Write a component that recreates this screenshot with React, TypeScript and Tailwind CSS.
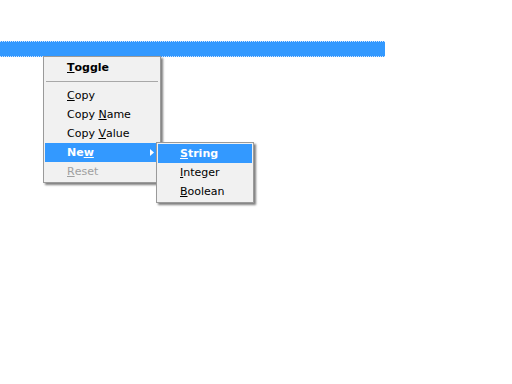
import React from "react";

const U = ({ children }: { children: React.ReactNode }) => (
  <span className="underline underline-offset-[1px]">{children}</span>
);

function Item({
  children,
  active,
  disabled,
  bold,
  arrow,
}: {
  children: React.ReactNode;
  active?: boolean;
  disabled?: boolean;
  bold?: boolean;
  arrow?: boolean;
}) {
  return (
    <div
      className={`relative flex h-[19px] items-center pl-[22px] pt-[2px] ${
        active ? "bg-[#3399ff] text-white" : disabled ? "text-[#a0a0a0]" : "text-black"
      } ${bold ? "font-bold" : ""}`}
    >
      {children}
      {arrow && (
        <svg className="absolute right-[5px] top-[6px]" width="4" height="7" viewBox="0 0 4 7">
          <path d="M0 0 L4 3.5 L0 7 Z" fill="white" />
        </svg>
      )}
    </div>
  );
}

export default function App() {
  return (
    <div
      className="relative h-[384px] w-[512px] bg-white text-[11px]"
      style={{ fontFamily: '"DejaVu Sans", Tahoma, sans-serif' }}
    >
      <div className="h-[41px]" />
      <div className="h-[16px] w-[385px] border-y border-dotted border-[#cfe4ff] bg-[#3399ff]" />

      {/* main menu */}
      <div className="absolute left-[43px] top-[56px] w-[118px] border border-[#9a9a9a] bg-[#f1f1f1] p-[1px] shadow-[2px_2px_2px_rgba(0,0,0,0.5)]">
        <Item bold>
          <U>T</U>oggle
        </Item>
        <div className="flex h-[9px] items-center px-[1px]">
          <div className="h-px w-full bg-[#a8a8a8]" />
        </div>
        <Item>
          <U>C</U>opy
        </Item>
        <Item>
          Copy&nbsp;<U>N</U>ame
        </Item>
        <Item>
          Copy&nbsp;<U>V</U>alue
        </Item>
        <Item active bold arrow>
          Ne<U>w</U>
        </Item>
        <Item disabled>
          <U>R</U>eset
        </Item>
      </div>

      {/* submenu */}
      <div className="absolute left-[156px] top-[142px] w-[98px] border border-[#9a9a9a] bg-[#f1f1f1] p-[1px] shadow-[2px_2px_2px_rgba(0,0,0,0.5)]">
        <Item active bold>
          <U>S</U>tring
        </Item>
        <Item>
          <U>I</U>nteger
        </Item>
        <Item>
          <U>B</U>oolean
        </Item>
      </div>
    </div>
  );
}
